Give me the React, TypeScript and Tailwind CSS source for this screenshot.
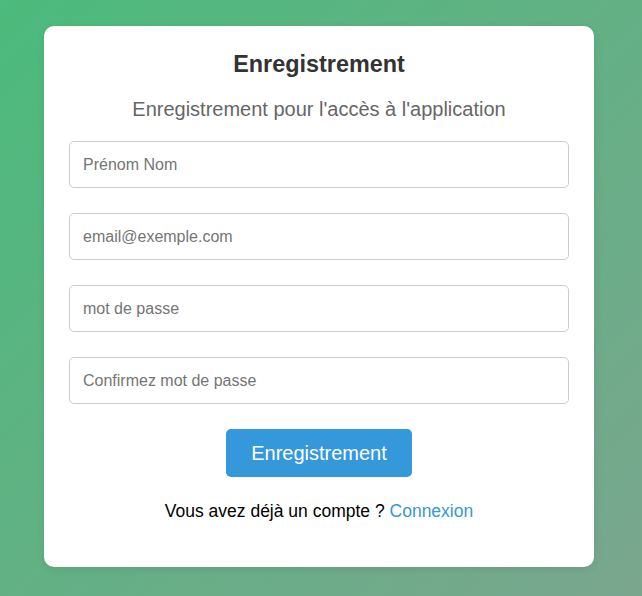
import React from "react";

export default function App() {
  const font = { fontFamily: '"Liberation Sans", Arial, sans-serif' };
  const inputCls =
    "w-full h-[47px] border border-[#cccccc] rounded-[5px] px-[13px] text-[16px] text-[#333] placeholder:text-[#757575] outline-none";
  return (
    <div
      className="min-h-[596px] w-full flex items-center justify-center pr-[4px] pb-[3px] bg-[linear-gradient(135deg,#4cbb7c,#7aa68e)]"
      style={font}
    >
      <div className="w-[550px] bg-white rounded-[10px] px-[25px] pt-[24px] pb-[45px] flex flex-col items-center shadow-[0_2px_10px_rgba(0,0,0,0.08)]">
        <h2 className="text-[23.4px] leading-[28px] font-bold text-[#333333]">Enregistrement</h2>
        <p className="mt-[19px] text-[20px] leading-[24px] text-[#666666]">
          Enregistrement pour l'accès à l'application
        </p>
        <form className="mt-[20px] w-full flex flex-col gap-[25px]" onSubmit={(e) => e.preventDefault()}>
          <input type="text" placeholder="Prénom Nom" className={inputCls} style={font} />
          <input type="email" placeholder="email@exemple.com" className={inputCls} style={font} />
          <input type="password" placeholder="mot de passe" className={inputCls} style={font} />
          <input type="password" placeholder="Confirmez mot de passe" className={inputCls} style={font} />
          <div className="flex justify-center">
            <button
              type="submit"
              className="w-[186px] h-[48px] bg-[#3498db] text-white text-[20px] rounded-[5px]"
              style={font}
            >
              Enregistrement
            </button>
          </div>
        </form>
        <p className="mt-[23px] text-[17.5px] leading-[22px] text-black">
          Vous avez déjà un compte ?{" "}
          <a href="#" className="text-[#3498db]">
            Connexion
          </a>
        </p>
      </div>
    </div>
  );
}
